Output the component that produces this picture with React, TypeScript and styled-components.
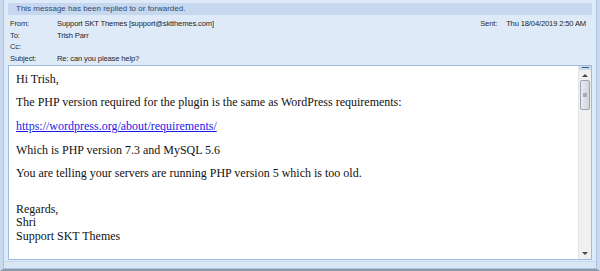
import React from "react";
import styled, { createGlobalStyle } from "styled-components";

const Global = createGlobalStyle`
  html, body { margin: 0; padding: 0; background: #dde8f6; }
  body { width: 600px; height: 271px; overflow: hidden; }
`;

const Window = styled.div`
  width: 600px;
  height: 271px;
  box-sizing: border-box;
  background: #dfeaf9;
  border-left: 3px solid #c9d9ee;
  border-right: 3px solid #c9d9ee;
  border-bottom: 2px solid #8f9aa8;
  display: flex;
  flex-direction: column;
  font-family: "Liberation Sans", Arial, sans-serif;
`;

const Inner = styled.div`
  flex: 1;
  display: flex;
  flex-direction: column;
  border-left: 1px solid #a9c2e3;
  border-right: 1px solid #a9c2e3;
  border-bottom: 1px solid #a9c2e3;
  padding: 3px 4px 0 4px;
  background: #dfeaf9;
  min-height: 0;
`;

const Banner = styled.div`
  height: 12px;
  background: #c5d8f0;
  color: #2e4a73;
  font-size: 8px;
  line-height: 12px;
  padding-left: 8px;
`;

const Header = styled.div`
  display: grid;
  grid-template-columns: 47px 1fr auto;
  grid-auto-rows: 11.7px;
  padding: 3px 6px 0 2px;
  font-size: 7.6px;
  letter-spacing: -0.15px;
  line-height: 11.7px;
  color: #1e1e1e;
`;

const Label = styled.div`
  color: #2b2b2b;
`;

const Value = styled.div``;

const Sent = styled.div`
  display: flex;
  gap: 9px;
`;

const BodyBox = styled.div`
  flex: 1;
  margin: 0;
  border: 1px solid #9ebbe2;
  background: #ffffff;
  display: flex;
  min-height: 0;
`;

const Message = styled.div`
  flex: 1;
  padding: 8px 7px 0 7px;
  font-family: "Liberation Serif", "Times New Roman", serif;
  font-size: 12px;
  line-height: 11.8px;
  color: #111;
`;

const Para = styled.p<{ $gap?: number }>`
  margin: 0 0 ${(p) => (p.$gap ?? 11.8)}px 0;
`;

const Signature = styled.p`
  margin: 0;
  line-height: 13.4px;
`;

const Link = styled.a`
  color: #1a1ae6;
  text-decoration: underline;
`;

const Scroll = styled.div`
  width: 12px;
  background: #f0f0f0;
  border-left: 1px solid #e4e4e4;
  display: flex;
  flex-direction: column;
  align-items: center;
`;

const Grip = styled.div`
  width: 12px;
  height: 4px;
  background: #c8daf0;
  display: flex;
  align-items: center;
  justify-content: center;
  &::after {
    content: "";
    width: 7px;
    height: 1px;
    background: #4a5a70;
  }
`;

const Arrow = styled.div<{ $down?: boolean }>`
  width: 0;
  height: 0;
  margin: ${(p) => (p.$down ? "auto 0 4px 0" : "4px 0 3px 0")};
  border-left: 3px solid transparent;
  border-right: 3px solid transparent;
  ${(p) =>
    p.$down
      ? "border-top: 3px solid #3c4a5e;"
      : "border-bottom: 3px solid #3c4a5e;"}
`;

const Thumb = styled.div`
  width: 8px;
  height: 28px;
  border: 1px solid #9aa4b2;
  border-radius: 2px;
  background: linear-gradient(to right, #e8eaee, #d2d6dc);
  display: flex;
  align-items: center;
  justify-content: center;
  &::after {
    content: "";
    width: 4px;
    height: 4px;
    background: #a8adb5;
  }
`;

const Footer = styled.div`
  height: 6px;
  border-top: 1px solid #c8d8ee;
  margin: 1px -4px 0 -4px;
  background: #dbe6f5;
`;

export default function App() {
  return (
    <>
      <Global />
      <Window>
        <Inner>
          <Banner>This message has been replied to or forwarded.</Banner>
          <Header>
            <Label>From:</Label>
            <Value>Support SKT Themes [support@sktthemes.com]</Value>
            <Sent>
              <Label>Sent:</Label>
              <Value>Thu 18/04/2019 2:50 AM</Value>
            </Sent>
            <Label>To:</Label>
            <Value>Trish Parr</Value>
            <div />
            <Label>Cc:</Label>
            <Value />
            <div />
            <Label>Subject:</Label>
            <Value>Re: can you please help?</Value>
            <div />
          </Header>
          <BodyBox>
            <Message>
              <Para>Hi Trish,</Para>
              <Para>The PHP version required for the plugin is the same as WordPress requirements:</Para>
              <Para>
                <Link href="#">https://wordpress.org/about/requirements/</Link>
              </Para>
              <Para>Which is PHP version 7.3 and MySQL 5.6</Para>
              <Para $gap={22.8}>You are telling your servers are running PHP version 5 which is too old.</Para>
              <Signature>
                Regards,
                <br />
                Shri
                <br />
                Support SKT Themes
              </Signature>
            </Message>
            <Scroll>
              <Grip />
              <Arrow />
              <Thumb />
              <Arrow $down />
            </Scroll>
          </BodyBox>
          <Footer />
        </Inner>
      </Window>
    </>
  );
}
